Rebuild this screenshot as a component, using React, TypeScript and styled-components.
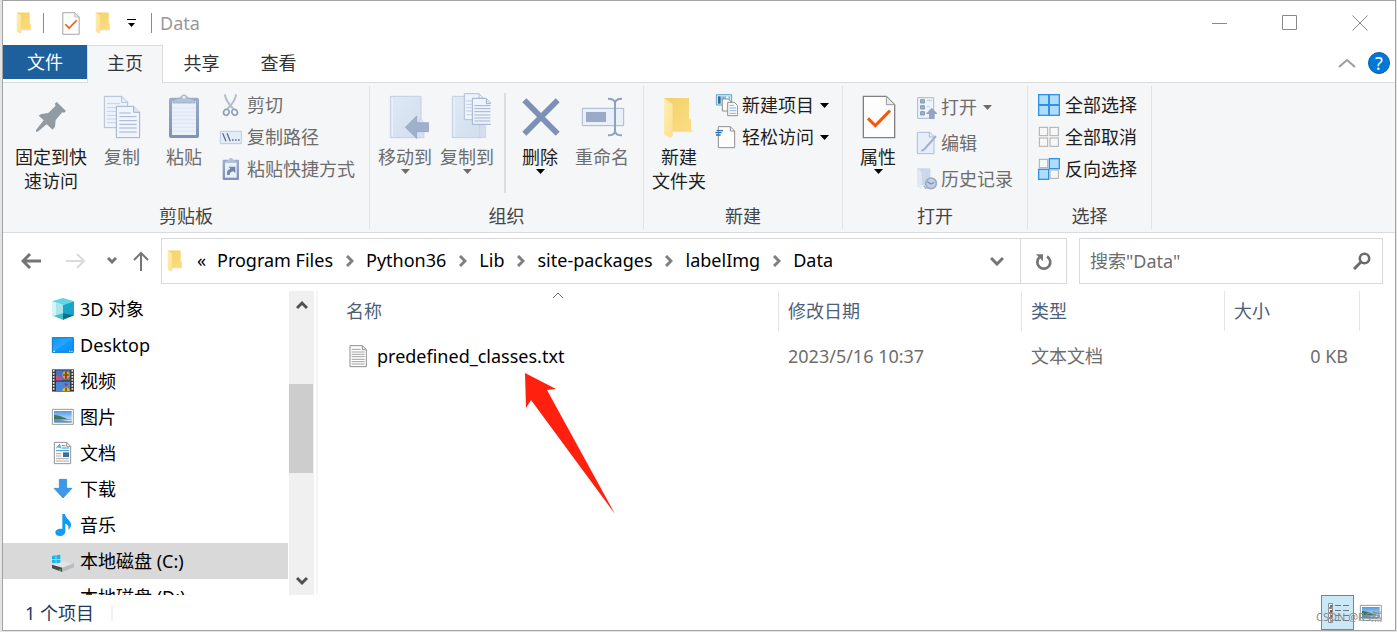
import React from 'react';
import styled, { createGlobalStyle, css } from 'styled-components';

const GlobalStyle = createGlobalStyle`
  * { box-sizing: border-box; }
  body {
    margin: 0;
    background: #e4e4e4;
    font-family: "Noto Sans", "Noto Sans CJK SC", sans-serif;
    font-size: 18px;
    line-height: 24px;
    color: #1e1e1e;
  }
  button, input {
    font: inherit;
    color: inherit;
    background: none;
    border: 0;
    padding: 0;
    margin: 0;
  }
  a { color: inherit; text-decoration: none; }
  svg { display: block; flex: none; }
`;

const Desktop = styled.div`
  height: 100vh;
  padding: 0 1px 1px 2px;
`;

const Window = styled.div`
  position: relative;
  height: 100%;
  display: flex;
  flex-direction: column;
  background: #fff;
  border: 1px solid #a3a3a3;
  overflow: hidden;
`;

/* title bar */
const TitleBar = styled.header`
  flex: none;
  height: 44px;
  display: flex;
  align-items: center;
  padding-left: 5px;
`;

const QuickButton = styled.button<{ $narrow?: boolean }>`
  width: ${(p) => (p.$narrow ? 24 : 32)}px;
  height: 32px;
  display: flex;
  align-items: center;
  justify-content: center;
`;

const QuickDivider = styled.span<{ $before: number; $after: number }>`
  width: 1px;
  height: 20px;
  margin: 0 ${(p) => p.$after}px 0 ${(p) => p.$before}px;
  background: #8c8c8c;
`;

const WindowTitle = styled.h1`
  margin: 0;
  flex: 1;
  font-size: 18px;
  font-weight: 400;
  color: #999;
`;

const WindowControl = styled.button`
  width: 70px;
  height: 44px;
  display: flex;
  align-items: center;
  justify-content: center;
`;

/* ribbon tabs */
const TabBar = styled.nav`
  flex: none;
  height: 38px;
  display: flex;
  border-bottom: 1px solid #dadbdc;
`;

const Tab = styled.button<{ $kind?: 'file' | 'active' }>`
  width: 77px;
  height: 37px;
  padding-bottom: 1px;
  color: #333;
  ${(p) => p.$kind === 'file' && css`
    width: 84px;
    height: 34px;
    padding-bottom: 0;
    background: #1e609c;
    color: #fff;
  `}
  ${(p) => p.$kind === 'active' && css`
    width: 76px;
    height: 38px;
    padding-bottom: 4px;
    background: #f5f6f7;
    border: 1px solid #dadbdc;
    border-bottom: 0;
  `}
`;

const TabTools = styled.div`
  margin-left: auto;
  padding: 0 5px 2px 0;
  display: flex;
  align-items: center;
  gap: 12px;
`;

const HelpButton = styled.button`
  width: 22px;
  height: 22px;
  border-radius: 50%;
  border: 1px solid #0b5cab;
  background: #0078d7;
  color: #fff;
  line-height: 20px;
`;

/* ribbon */
const Ribbon = styled.section`
  flex: none;
  height: 150px;
  display: flex;
  padding: 3px 0;
  background: #f5f6f7;
  border-bottom: 1px solid #dadbdc;
`;

const Group = styled.section`
  display: flex;
  flex-direction: column;
  justify-content: space-between;
  padding: 3px 0 1px;
  border-right: 1px solid #e2e3e4;
`;

const GroupItems = styled.div<{ $left: number; $right: number }>`
  display: flex;
  align-items: flex-start;
  padding: 0 ${(p) => p.$right}px 0 ${(p) => p.$left}px;
`;

const GroupLabel = styled.h2`
  margin: 0;
  font-size: 18px;
  font-weight: 400;
  text-align: center;
  color: #444;
`;

const BigButton = styled.button<{ $wide?: boolean; $off?: boolean }>`
  width: ${(p) => (p.$wide ? 80 : 62)}px;
  display: flex;
  flex-direction: column;
  align-items: center;
  white-space: nowrap;
  color: ${(p) => (p.$off ? '#6d6d6d' : '#1e1e1e')};
`;

const SmallList = styled.div<{ $row: number }>`
  display: grid;
  grid-auto-rows: ${(p) => p.$row}px;
  margin-left: 4px;
`;

const SmallButton = styled.button<{ $off?: boolean }>`
  display: flex;
  align-items: center;
  gap: 4px;
  white-space: nowrap;
  color: ${(p) => (p.$off ? '#6d6d6d' : '#1e1e1e')};
`;

const DropMark = styled.span`
  margin-left: 2px;
`;

const ItemDivider = styled.span`
  width: 2px;
  height: 100px;
  margin: 4px 3px 0 6px;
  background: #dcdddf;
`;

/* navigation */
const NavBar = styled.div`
  flex: none;
  height: 58px;
  display: flex;
  align-items: flex-start;
  padding: 5px 12px 0 11px;
`;

const NavButton = styled.button<{ $width: number }>`
  width: ${(p) => p.$width}px;
  height: 46px;
  display: flex;
  align-items: center;
  justify-content: center;
`;

const AddressBox = styled.div`
  flex: 1;
  height: 46px;
  margin-right: 12px;
  display: flex;
  align-items: center;
  border: 1px solid #d9d9d9;
  padding-left: 5px;
  color: #000;
`;

const Crumbs = styled.nav`
  flex: 1;
  display: flex;
  align-items: center;
  padding-bottom: 2px;
`;

const Overflow = styled.span`
  width: 34px;
  padding-left: 14px;
`;

const CrumbArrow = styled.span`
  width: 33px;
  padding-top: 2px;
  display: flex;
  justify-content: center;
`;

const RefreshCell = styled.div`
  height: 44px;
  display: flex;
  border-left: 1px solid #d9d9d9;
`;

const SearchBox = styled.label`
  flex: 0 0 304px;
  height: 46px;
  display: flex;
  align-items: center;
  border: 1px solid #d9d9d9;
  padding: 0 11px 0 10px;
`;

const SearchInput = styled.input`
  flex: 1;
  min-width: 0;
  outline: none;
  &::placeholder { color: #6d6d6d; opacity: 1; }
`;

/* body */
const Body = styled.div`
  flex: 1;
  min-height: 0;
  display: flex;
`;

const Sidebar = styled.nav`
  flex: 0 0 285px;
  overflow: hidden;
  color: #000;
`;

const SideItem = styled.a<{ $selected?: boolean }>`
  height: 36px;
  display: flex;
  align-items: center;
  gap: 5px;
  padding-left: 48px;
  background: ${(p) => (p.$selected ? '#d9d9d9' : 'transparent')};
`;

const ScrollTrack = styled.div`
  width: 25px;
  margin-left: 1px;
  display: flex;
  flex-direction: column;
  background: #f0f0f0;
`;

const ScrollButton = styled.button`
  height: 28px;
  display: flex;
  align-items: center;
  justify-content: center;
`;

const ScrollSpace = styled.div<{ $grow: number }>`
  flex: ${(p) => p.$grow} 1 0;
`;

const ScrollThumb = styled.div`
  height: 89px;
  margin-right: 1px;
  background: #cdcdcd;
`;

const Pane = styled.main`
  position: relative;
  flex: 1;
  min-width: 0;
  margin-left: 2px;
  padding: 0 35px 0 19px;
  border-left: 2px solid #f5f5f5;
`;

const FileTable = styled.table`
  width: 100%;
  table-layout: fixed;
  border-collapse: separate;
  border-spacing: 0;
`;

const HeadCell = styled.th<{ $width?: number }>`
  position: relative;
  width: ${(p) => (p.$width ? `${p.$width}px` : 'auto')};
  height: 40px;
  padding: 0 9px;
  border-right: 1px solid #e5e5e5;
  text-align: left;
  font-weight: 400;
  color: #4c607a;
`;

const SortMark = styled.span`
  position: absolute;
  top: 0;
  left: 50%;
  margin-left: -6px;
`;

const Cell = styled.td<{ $end?: boolean }>`
  height: 50px;
  padding: 0 ${(p) => (p.$end ? 12 : 9)}px 0 9px;
  text-align: ${(p) => (p.$end ? 'right' : 'left')};
  color: #6d6d6d;
`;

const FileName = styled.span`
  display: flex;
  align-items: center;
  gap: 7px;
  color: #000;
`;

const Pointer = styled.svg`
  position: absolute;
  left: 206px;
  top: 80px;
`;

/* status bar */
const StatusBar = styled.footer`
  flex: none;
  height: 35px;
  display: flex;
  align-items: center;
  padding: 0 8px 0 22px;
  color: #1e395b;
`;

const StatusDivider = styled.span`
  width: 2px;
  height: 16px;
  margin: 0 auto 0 17px;
  background: #f2f2f2;
`;

const ViewButton = styled.button<{ $on?: boolean }>`
  width: 33px;
  height: 35px;
  display: flex;
  align-items: center;
  justify-content: center;
  ${(p) => p.$on && css`
    background: #cbe8f6;
    border: 1px solid #26a0da;
  `}
`;

const Watermark = styled.span`
  position: absolute;
  right: 13px;
  bottom: 4px;
  font-size: 11px;
  line-height: 18px;
  color: #8b8b8b;
`;

type ArtProps = { box: string; w?: number; h?: number; children: React.ReactNode };
const Art = ({ box, w = 24, h = 24, children }: ArtProps) => (
  <svg width={w} height={h} viewBox={box} fill="none" aria-hidden="true">{children}</svg>
);
const BigArt = ({ x, children }: { x: number; children: React.ReactNode }) => (
  <Art box={`${x} 12 144 168`} w={48} h={56}>{children}</Art>
);

const Caret = ({ color = '#000' }: { color?: string }) => (
  <svg width="9" height="5" viewBox="0 0 9 5" aria-hidden="true"><path d="M0 0h9L4.5 5z" fill={color} /></svg>
);

const Gradients = () => (
  <svg width="0" height="0" style={{ position: 'absolute' }} aria-hidden="true">
    <defs>
      <linearGradient id="fold" x1="0" y1="0" x2="1" y2="1">
        <stop offset="0" stopColor="#f3cf68" /><stop offset="1" stopColor="#fbdd83" />
      </linearGradient>
      <linearGradient id="flap" x1="0" y1="0" x2="1" y2="1">
        <stop offset="0" stopColor="#ffefb4" /><stop offset="1" stopColor="#fbdf90" />
      </linearGradient>
      <linearGradient id="board" x1="0" y1="0" x2="0" y2="1">
        <stop offset="0" stopColor="#9cabc8" /><stop offset="1" stopColor="#7f92b5" />
      </linearGradient>
      <linearGradient id="pale" x1="0" y1="0" x2="1" y2="1">
        <stop offset="0" stopColor="#dfe9f6" /><stop offset="1" stopColor="#d2deed" />
      </linearGradient>
      <linearGradient id="sky" x1="0" y1="0" x2="0" y2="1">
        <stop offset="0" stopColor="#4f9be6" /><stop offset="1" stopColor="#e6f3fb" />
      </linearGradient>
      <linearGradient id="screen" x1="0" y1="0" x2="1" y2="1">
        <stop offset="0" stopColor="#0d95f5" /><stop offset="0.5" stopColor="#2ba6ff" /><stop offset="0.5" stopColor="#139aff" /><stop offset="1" stopColor="#0a90f0" />
      </linearGradient>
    </defs>
  </svg>
);

const FolderShape = () => (
  <>
    <path d="M96 136h66l-8 6H98z" fill="#e3e3e3" />
    <path d="M72 39h75v60l6 6v33H97z" fill="url(#fold)" />
    <path d="M72 39l26 18v95l-6 7-20-10z" fill="url(#flap)" />
  </>
);
const SmallFolder = () => <Art box="69 36 90 126" w={16} h={22}><FolderShape /></Art>;

const CheckDoc = () => (
  <>
    <path d="M670 34h69l25 25v99h-94z" fill="#fdfdfd" stroke="#808080" strokeWidth="4" />
    <path d="M739 34v25h25z" fill="#e8e8e8" stroke="#9a9a9a" strokeWidth="3" />
    <path d="M684 100l22 22 44-45" stroke="#f2590d" strokeWidth="9" />
  </>
);

const PinIcon = () => (
  <BigArt x={81}>
    <path d="M170 51l28 27-6 5-5-1-20 23-2 20-7 9-18-16-27 22h-5v-5l23-29-15-14 8-5 21-3 22-22-3-6z" fill="#919ba3" />
  </BigArt>
);
const CopyIcon = () => (
  <BigArt x={294}>
    <path d="M313 34h52l18 18v76h-70z" fill="#edf3fb" stroke="#afbed6" strokeWidth="3" />
    <path d="M365 34v18h18" stroke="#afbed6" strokeWidth="3" />
    <path d="M321 56h40M321 68h54M321 79h30M321 91h28M321 102h28M321 113h28" stroke="#c6d2e4" strokeWidth="3" />
    <path d="M349 64h52l18 18v76h-70z" fill="#f0f5fc" stroke="#9fb0cd" strokeWidth="3" />
    <path d="M401 64v18h18" fill="#dbe5f2" stroke="#9fb0cd" strokeWidth="3" />
    <path d="M358 84h34M358 95h52M358 107h52M358 118h52M358 129h52M358 141h52" stroke="#a3b3ce" strokeWidth="3" />
  </BigArt>
);
const PasteIcon = () => (
  <BigArt x={480}>
    <rect x="507" y="38" width="90" height="121" rx="6" fill="url(#board)" />
    <path d="M516 48h72v102h-72z" fill="#eaf1fb" />
    <path d="M516 69h72M516 81h72M516 92h72M516 104h72M516 115h72M516 127h72M516 138h72" stroke="#d5e0ef" strokeWidth="2" />
    <path d="M518 54c2-11 12-14 24-15 0-12 20-12 20 0 12 1 22 4 24 15z" fill="#b4c2d9" stroke="#92a3c2" strokeWidth="2" />
    <circle cx="552" cy="37" r="4" fill="#eef3fa" />
  </BigArt>
);
const CutIcon = () => (
  <Art box="657 24 72 72">
    <path d="M675 28c0 12 6 20 12 28l13 16M708 28c0 12-6 20-12 28l-14 16" stroke="#b3bdcd" strokeWidth="6" />
    <ellipse cx="679" cy="82" rx="8" ry="9" stroke="#8b9fbe" strokeWidth="5" transform="rotate(25 679 82)" />
    <ellipse cx="704" cy="82" rx="8" ry="9" stroke="#8b9fbe" strokeWidth="5" transform="rotate(-25 704 82)" />
  </Art>
);
const PathIcon = () => (
  <Art box="657 120 72 72">
    <path d="M661 139h63v37h-63z" fill="#e4ecf8" stroke="#bccadf" strokeWidth="3" />
    <path d="M668 145l10 24M681 145l10 24" stroke="#5e7194" strokeWidth="4" />
    <path d="M696 165h5M705 165h5M714 165h5" stroke="#5e7194" strokeWidth="5" />
  </Art>
);
const ShortcutIcon = () => (
  <Art box="657 216 72 72">
    <rect x="668" y="224" width="49" height="61" rx="3" fill="url(#board)" />
    <path d="M675 232h35v46h-35z" fill="#e9f0fa" />
    <path d="M676 234c1-7 7-8 11-9 0-8 12-8 12 0 4 1 10 2 11 9z" fill="#b4c2d9" />
    <path d="M682 270c-3-10 2-17 9-18l-5-7h20v20l-6-6c-7 1-11 4-11 11z" fill="#7186ad" />
  </Art>
);
const MoveToIcon = () => (
  <BigArt x={33}>
    <path d="M61 34h92v124h-92z" fill="url(#pale)" stroke="#c3d0e4" strokeWidth="3" />
    <path d="M67 38v117" stroke="#edf3fb" strokeWidth="3" />
    <path d="M134 158v-42l20-14 8 14v42z" fill="#d7e2f0" stroke="#c3d0e4" strokeWidth="2" />
    <path d="M106 127l34-34v20h36v27h-36v20z" fill="#9fafcc" stroke="#8c9dbd" strokeWidth="2" />
  </BigArt>
);
const CopyToIcon = () => (
  <BigArt x={219}>
    <path d="M247 34h84v124h-84z" fill="url(#pale)" stroke="#c3d0e4" strokeWidth="3" />
    <path d="M253 38v117" stroke="#edf3fb" strokeWidth="3" />
    <path d="M329 110h18v48h-18z" fill="#d3deed" stroke="#c3d0e4" strokeWidth="2" />
    <path d="M283 26h44l14 14v64h-58z" fill="#eef4fb" stroke="#b0bfd7" strokeWidth="3" />
    <path d="M327 26v14h14" stroke="#b0bfd7" strokeWidth="3" />
    <path d="M289 48h18M289 58h16M289 68h16M289 78h16M289 89h16" stroke="#c0cde0" strokeWidth="3" />
    <path d="M307 40h42l16 16v62h-58z" fill="#eef4fb" stroke="#9fb0cd" strokeWidth="3" />
    <path d="M349 40v16h16" fill="#dbe5f2" stroke="#9fb0cd" strokeWidth="3" />
    <path d="M313 62h48M313 71h48M313 80h48M313 90h48M313 99h48M313 108h48" stroke="#a3b3ce" strokeWidth="3" />
  </BigArt>
);
const DeleteIcon = () => (
  <BigArt x={438}>
    <path d="M463 46l100 100M563 46L463 146" stroke="#7d90b5" strokeWidth="17" />
  </BigArt>
);
const RenameIcon = () => (
  <BigArt x={624}>
    <path d="M637 70h124v52H637z" fill="#e9f0fa" stroke="#a9b8d1" strokeWidth="3" />
    <path d="M648 81h60v30h-60z" fill="#9aaac7" />
    <path d="M735 52v88M714 41c13 0 21 3 21 14 0-11 8-14 21-14M714 151c13 0 21-3 21-14 0 11 8 14 21 14" stroke="#8fa1c0" strokeWidth="6" />
  </BigArt>
);
const NewItemIcon = () => (
  <Art box="222 24 72 72">
    <path d="M229 29h46v31h-46z" fill="#cfe6f5" stroke="#6aa5c8" strokeWidth="3" />
    <path d="M234 34h8v22h-8z" fill="#2b6d97" /><path d="M244 34h26v12h-26z" fill="#7ebcdf" /><circle cx="262" cy="38" r="4" fill="#fff" />
    <path d="M247 42h18l9 9v27h-27z" fill="#fafafa" stroke="#8f8f8f" strokeWidth="3" />
    <path d="M263 52h20l10 10v30h-30z" fill="#fafafa" stroke="#8f8f8f" strokeWidth="3" />
    <path d="M268 61h14M268 69h21M268 77h21M268 85h21" stroke="#8db9dc" strokeWidth="3" />
  </Art>
);
const EasyAccessIcon = () => (
  <Art box="222 120 72 72">
    <path d="M235 125h36l13 13v50h-49z" fill="#fdfdfd" stroke="#8f8f8f" strokeWidth="3" />
    <path d="M271 125v13h13" stroke="#8f8f8f" strokeWidth="3" />
    <path d="M230 137h19M226 143h19M228 150h14" stroke="#2671b5" strokeWidth="4" />
  </Art>
);
const OpenIcon = () => (
  <Art box="39 30 72 72">
    <path d="M53 38h48v62H53z" fill="#edf3fb" stroke="#aab9d2" strokeWidth="3" />
    <path d="M62 44h11v10H62zM62 62h11v10H62zM62 80h11v10H62z" fill="#a5b5cf" stroke="#7e92b4" strokeWidth="3" />
    <path d="M81 46h16M81 65h8" stroke="#bccadf" strokeWidth="3" />
    <path d="M95 68l19 19h-10v18H87V87H77z" fill="#94a5c4" />
  </Art>
);
const EditIcon = () => (
  <Art box="39 138 72 72">
    <path d="M52 142h38l12 12v52H52z" fill="#e6eef9" stroke="#aebcd4" strokeWidth="3" />
    <path d="M88 142v14h14" stroke="#aebcd4" strokeWidth="3" />
    <path d="M108 153L74 192l-10 6" stroke="#a0afca" strokeWidth="6" />
  </Art>
);
const HistoryIcon = () => (
  <Art box="42 246 72 72">
    <path d="M54 250h40v50H66z" fill="#cbd8ea" />
    <path d="M54 250l14 12v50l-14-8z" fill="#dfe9f6" />
    <circle cx="96" cy="295" r="16" fill="#c3cfe2" stroke="#9badc9" strokeWidth="5" />
    <path d="M85 290l10 7 10-4" stroke="#7f93b5" strokeWidth="4" />
    <path d="M74 302l6 8 8-2" stroke="#9badc9" strokeWidth="4" />
  </Art>
);

const Tile = ({ x, y, on }: { x: number; y: number; on?: boolean }) => on
  ? <rect x={x} y={y} width="30" height="30" fill="#b0dcff" stroke="#2f93e0" strokeWidth="4" />
  : <rect x={x + 2} y={y + 2} width="25" height="25" fill="#f7f7f7" stroke="#adadad" strokeWidth="3" />;
const TilesIcon = ({ y, on }: { y: number; on: boolean[] }) => (
  <Art box={`414 ${y} 72 72`}>
    <Tile x={419} y={y + 5} on={on[0]} /><Tile x={451} y={y + 5} on={on[1]} />
    <Tile x={419} y={y + 37} on={on[2]} /><Tile x={451} y={y + 37} on={on[3]} />
  </Art>
);

const Cube = () => (
  <Art box="153 195 72 72">
    <path d="M156 208l33-10 33 10-33 11z" fill="#63d4e3" />
    <path d="M156 208l33 11v44l-33-13z" fill="#a9e6ec" />
    <path d="M156 208l12 4v40l-12-3z" fill="#d4f4f6" />
    <path d="M222 208l-33 11v44l33-13z" fill="#16a6c8" />
    <path d="M189 244l33 6-33 13z" fill="#08728c" />
    <path d="M189 244v19l-28-11z" fill="#45bccd" />
  </Art>
);
const DesktopIcon = () => (
  <Art box="153 303 72 72">
    <path d="M157 317h63v44h-63z" fill="url(#screen)" stroke="#0a76c9" strokeWidth="3" />
    <path d="M160 358h5M208 358h3M214 358h4" stroke="#fff" strokeWidth="3" />
  </Art>
);
const VideoIcon = () => (
  <Art box="153 42 72 72">
    <path d="M156 43h66v67h-66z" fill="#3a3a3a" />
    <path d="M161 45v64M217 45v64" stroke="#e6e6e6" strokeWidth="5" strokeDasharray="5 4" />
    <path d="M168 46h42v30h-42z" fill="#3f74cf" /><path d="M168 80h42v28h-42z" fill="#4a86da" />
    <path d="M168 62l10 2 10 8-4 4h-16z" fill="#e8437a" />
    <circle cx="198" cy="60" r="11" fill="#e2a526" /><path d="M198 49v22" stroke="#c22b25" strokeWidth="6" /><path d="M189 60h18" stroke="#2e6b2c" strokeWidth="4" />
    <path d="M187 108c0-14 22-14 22 0z" fill="#efb722" /><path d="M193 84l10 3-5 8z" fill="#c22b25" /><path d="M198 98v10" stroke="#444" strokeWidth="4" />
  </Art>
);
const Scene = () => (
  <>
    <path d="M157 163h63v45h-63z" fill="#fff" stroke="#9b9b9b" strokeWidth="3" />
    <path d="M162 168h53v35h-53z" fill="url(#sky)" />
    <path d="M162 180c14-1 28 8 40 12l-40 2z" fill="#3e7461" />
    <path d="M162 193h53v10h-53z" fill="#5d90b4" /><path d="M180 197l35-3v5z" fill="#dceaf3" />
  </>
);
const PicturesIcon = () => <Art box="153 150 72 72"><Scene /></Art>;
const DocumentsIcon = () => (
  <Art box="153 258 72 72">
    <path d="M163 262h37l12 12v52h-49z" fill="#fff" stroke="#929292" strokeWidth="3" />
    <path d="M200 262v12h12" stroke="#929292" strokeWidth="3" />
    <path d="M169 280l10-12 2 12M174 276h7M185 272h11M185 279h22M168 287h39" stroke="#2a97d0" strokeWidth="3" />
    <path d="M168 296h16M168 303h16M168 311h39M168 318h39" stroke="#a8a8a8" strokeWidth="3" />
    <path d="M189 292h18v14h-18z" fill="#3e6e98" />
  </Art>
);
const DownloadIcon = () => (
  <Art box="153 366 72 72"><path d="M178 373h22v27h16l-27 29-27-29h16z" fill="#3b99e8" stroke="#2683d0" strokeWidth="2" /></Art>
);
const MusicIcon = () => (
  <Art box="153 69 72 72">
    <path d="M187 72h8c1 14 19 18 18 34-1 7-4 11-8 14 3-13-3-17-9-19v22c0 11-8 15-16 15-8 0-14-4-14-10 0-8 11-13 21-11z" fill="#119bf2" />
  </Art>
);
const DriveIcon = () => (
  <Art box="153 177 72 72">
    <path d="M156 198l11-2v11h-11zM169 196l12-2v13h-12zM156 209h11v11l-11-2zM169 209h12v12l-12-1z" fill="#13b7ee" />
    <path d="M156 226l28-9 6-5 32 12-35 13z" fill="#e2e4e5" />
    <path d="M156 224l31 9v13l-31-11z" fill="#454a48" /><path d="M222 220l-35 13v13l35-14z" fill="#b9bcbe" />
    <path d="M180 238v4" stroke="#63d66c" strokeWidth="4" />
  </Art>
);
const TextFileIcon = () => (
  <Art box="49 336 72 72">
    <path d="M61 341h37l12 12v51H61z" fill="#fff" stroke="#8f8f8f" strokeWidth="3" />
    <path d="M98 341v12h12" stroke="#8f8f8f" strokeWidth="3" />
    <path d="M66 352h27M66 360h39M66 367h39M66 374h39M66 382h39M66 389h39M66 396h39" stroke="#a2a2a2" strokeWidth="3" />
  </Art>
);

const Chevron = ({ d, w, h, color = '#6b6b6b', line = 3 }: { d: string; w: number; h: number; color?: string; line?: number }) => (
  <svg width={w} height={h} viewBox={`0 0 ${w} ${h}`} fill="none" aria-hidden="true"><path d={d} stroke={color} strokeWidth={line} /></svg>
);

const crumbs = ['Program Files', 'Python36', 'Lib', 'site-packages', 'labelImg', 'Data'];

const places = [
  { name: '3D 对象', icon: <Cube /> },
  { name: 'Desktop', icon: <DesktopIcon /> },
  { name: '视频', icon: <VideoIcon /> },
  { name: '图片', icon: <PicturesIcon /> },
  { name: '文档', icon: <DocumentsIcon /> },
  { name: '下载', icon: <DownloadIcon /> },
  { name: '音乐', icon: <MusicIcon /> },
  { name: '本地磁盘 (C:)', icon: <DriveIcon />, selected: true },
  { name: '本地磁盘 (D:)', icon: <Art box="0 0 24 24">{null}</Art> },
];

export default function App() {
  return (
    <Desktop>
      <GlobalStyle />
      <Gradients />
      <Window>
        <TitleBar>
          <QuickButton aria-label="窗口菜单"><SmallFolder /></QuickButton>
          <QuickDivider $before={3} $after={11} />
          <QuickButton aria-label="属性"><Art box="666 30 102 132" w={18} h={23}><CheckDoc /></Art></QuickButton>
          <QuickButton aria-label="新建文件夹"><SmallFolder /></QuickButton>
          <QuickButton $narrow aria-label="自定义快速访问工具栏">
            <svg width="9" height="8" viewBox="0 0 9 8" aria-hidden="true"><path d="M0 0h9v1H0zM1 4h7L4.500 8z" fill="#000" /></svg>
          </QuickButton>
          <QuickDivider $before={8} $after={8} />
          <WindowTitle>Data</WindowTitle>
          <WindowControl aria-label="最小化"><Chevron w={16} h={16} d="M0 8.5h15" line={1} color="#8a8a8a" /></WindowControl>
          <WindowControl aria-label="最大化"><Chevron w={16} h={16} d="M.5 .5h14v14H.5z" line={1} color="#8a8a8a" /></WindowControl>
          <WindowControl aria-label="关闭"><Chevron w={16} h={16} d="M.5 .5l15 15M15.500 .5l-15 15" line={1} color="#8a8a8a" /></WindowControl>
        </TitleBar>

        <TabBar>
          <Tab $kind="file">文件</Tab>
          <Tab $kind="active">主页</Tab>
          <Tab>共享</Tab>
          <Tab>查看</Tab>
          <TabTools>
            <button aria-label="最小化功能区"><Chevron w={18} h={10} d="M1 9l8-7 8 7" line={2} color="#9c9c9c" /></button>
            <HelpButton aria-label="帮助">?</HelpButton>
          </TabTools>
        </TabBar>

        <Ribbon>
          <Group>
            <GroupItems $left={8} $right={14}>
              <BigButton $wide><PinIcon />固定到快<br />速访问</BigButton>
              <BigButton $off><CopyIcon />复制</BigButton>
              <BigButton $off><PasteIcon />粘贴</BigButton>
              <SmallList $row={32}>
                <SmallButton $off><CutIcon />剪切</SmallButton>
                <SmallButton $off><PathIcon />复制路径</SmallButton>
                <SmallButton $off><ShortcutIcon />粘贴快捷方式</SmallButton>
              </SmallList>
            </GroupItems>
            <GroupLabel>剪贴板</GroupLabel>
          </Group>

          <Group>
            <GroupItems $left={4} $right={10}>
              <BigButton $off><MoveToIcon />移动到<Caret color="#6d6d6d" /></BigButton>
              <BigButton $off><CopyToIcon />复制到<Caret color="#6d6d6d" /></BigButton>
              <ItemDivider />
              <BigButton><DeleteIcon />删除<Caret /></BigButton>
              <BigButton $off><RenameIcon />重命名</BigButton>
            </GroupItems>
            <GroupLabel>组织</GroupLabel>
          </Group>

          <Group>
            <GroupItems $left={4} $right={13}>
              <BigButton><BigArt x={45}><FolderShape /></BigArt>新建<br />文件夹</BigButton>
              <SmallList $row={32}>
                <SmallButton><NewItemIcon />新建项目<DropMark><Caret /></DropMark></SmallButton>
                <SmallButton><EasyAccessIcon />轻松访问<DropMark><Caret /></DropMark></SmallButton>
              </SmallList>
            </GroupItems>
            <GroupLabel>新建</GroupLabel>
          </Group>

          <Group>
            <GroupItems $left={4} $right={14}>
              <BigButton><BigArt x={642}><CheckDoc /></BigArt>属性<Caret /></BigButton>
              <SmallList $row={36}>
                <SmallButton $off><OpenIcon />打开<DropMark><Caret color="#6d6d6d" /></DropMark></SmallButton>
                <SmallButton $off><EditIcon />编辑</SmallButton>
                <SmallButton $off><HistoryIcon />历史记录</SmallButton>
              </SmallList>
            </GroupItems>
            <GroupLabel>打开</GroupLabel>
          </Group>

          <Group>
            <GroupItems $left={5} $right={14}>
              <SmallList $row={32}>
                <SmallButton><TilesIcon y={24} on={[true, true, true, true]} />全部选择</SmallButton>
                <SmallButton><TilesIcon y={120} on={[false, false, false, false]} />全部取消</SmallButton>
                <SmallButton><TilesIcon y={216} on={[false, true, true, false]} />反向选择</SmallButton>
              </SmallList>
            </GroupItems>
            <GroupLabel>选择</GroupLabel>
          </Group>
        </Ribbon>

        <NavBar>
          <NavButton $width={34} aria-label="后退"><Chevron w={20} h={16} d="M9 1L2 8l7 7M2 8h18" line={3} color="#757575" /></NavButton>
          <NavButton $width={55} aria-label="前进"><Chevron w={20} h={16} d="M11 1l7 7-7 7M18 8H0" line={2} color="#dadada" /></NavButton>
          <NavButton $width={17} aria-label="最近的位置"><Chevron w={10} h={8} d="M1 1l4 4 4-4" color="#757575" /></NavButton>
          <NavButton $width={41} aria-label="上移"><Chevron w={16} h={20} d="M1 9l7-7 7 7M8 2v18" line={2} color="#757575" /></NavButton>
          <AddressBox>
            <SmallFolder />
            <Crumbs aria-label="地址">
              <Overflow>«</Overflow>
              {crumbs.map((name, i) => (
                <React.Fragment key={name}>
                  {i > 0 && <CrumbArrow><Chevron w={8} h={12} d="M1 1l5 5-5 5" color="#808080" /></CrumbArrow>}
                  <a href="#">{name}</a>
                </React.Fragment>
              ))}
            </Crumbs>
            <NavButton $width={46} aria-label="以前的位置"><Chevron w={14} h={10} d="M1 2l6 6 6-6" color="#757575" /></NavButton>
            <RefreshCell>
              <NavButton $width={45} aria-label="刷新">
                <svg width="18" height="18" viewBox="0 0 18 18" fill="none" aria-hidden="true">
                  <path d="M12 3.500a6.500 6.500 0 1 1-7.500 .8" stroke="#757575" strokeWidth="2.700" />
                  <path d="M1 1.300h7v7z" fill="#757575" />
                </svg>
              </NavButton>
            </RefreshCell>
          </AddressBox>
          <SearchBox>
            <SearchInput type="text" aria-label="搜索" placeholder={'搜索"Data"'} />
            <svg width="18" height="18" viewBox="0 0 18 18" fill="none" aria-hidden="true">
              <circle cx="11.500" cy="6.500" r="4.700" stroke="#6b6b6b" strokeWidth="2.600" />
              <path d="M8 10l-7 7" stroke="#6b6b6b" strokeWidth="3" />
            </svg>
          </SearchBox>
        </NavBar>

        <Body>
          <Sidebar aria-label="导航窗格">
            {places.map((p) => (
              <SideItem key={p.name} href="#" $selected={p.selected}>{p.icon}{p.name}</SideItem>
            ))}
          </Sidebar>
          <ScrollTrack>
            <ScrollButton aria-label="向上滚动"><Chevron w={12} h={10} d="M1 8l5-5 5 5" color="#505050" /></ScrollButton>
            <ScrollSpace $grow={65} />
            <ScrollThumb />
            <ScrollSpace $grow={94} />
            <ScrollButton aria-label="向下滚动"><Chevron w={12} h={10} d="M1 2l5 5 5-5" color="#505050" /></ScrollButton>
          </ScrollTrack>
          <Pane>
            <FileTable>
              <thead>
                <tr>
                  <HeadCell>
                    <SortMark><Chevron w={12} h={8} d="M1 7l5-5 5 5" line={1} /></SortMark>
                    名称
                  </HeadCell>
                  <HeadCell $width={243}>修改日期</HeadCell>
                  <HeadCell $width={203}>类型</HeadCell>
                  <HeadCell $width={135}>大小</HeadCell>
                </tr>
              </thead>
              <tbody>
                <tr>
                  <Cell><FileName><TextFileIcon />predefined_classes.txt</FileName></Cell>
                  <Cell>2023/5/16 10:37</Cell>
                  <Cell>文本文档</Cell>
                  <Cell $end>0 KB</Cell>
                </tr>
              </tbody>
            </FileTable>
            <Pointer width="94" height="146" viewBox="0 0 94 146" aria-hidden="true">
              <path d="M1 2l31 16-9 1 68 124L7 29l-5 8z" fill="#ff2010" />
            </Pointer>
          </Pane>
        </Body>

        <StatusBar>
          1 个项目
          <StatusDivider />
          <ViewButton $on aria-label="详细信息">
            <svg width="22" height="22" viewBox="0 0 22 22" fill="none" aria-hidden="true">
              <path d="M1.500 1.500h4v4h-4zM1.500 6.500h4v4h-4zM1.500 11.500h4v4h-4zM1.500 16.500h4v4h-4z" fill="#fff" stroke="#8a8a8a" />
              <path d="M3 3h2v2H3z" fill="#3579b8" /><path d="M3 8h2v2H3z" fill="#c0392b" /><path d="M3 13h2v2H3z" fill="#b53a2a" /><path d="M3 18h2v2H3z" fill="#d0a020" />
              <path d="M8 3.500h6M16 3.500h6M8 8.500h6M16 8.500h6M8 13.500h6M16 13.500h6M8 18.500h6M16 18.500h6" stroke="#6b7a80" />
            </svg>
          </ViewButton>
          <ViewButton aria-label="大图标"><Art box="153 150 72 72"><Scene /></Art></ViewButton>
        </StatusBar>
        <Watermark>CSDN @RS然</Watermark>
      </Window>
    </Desktop>
  );
}
